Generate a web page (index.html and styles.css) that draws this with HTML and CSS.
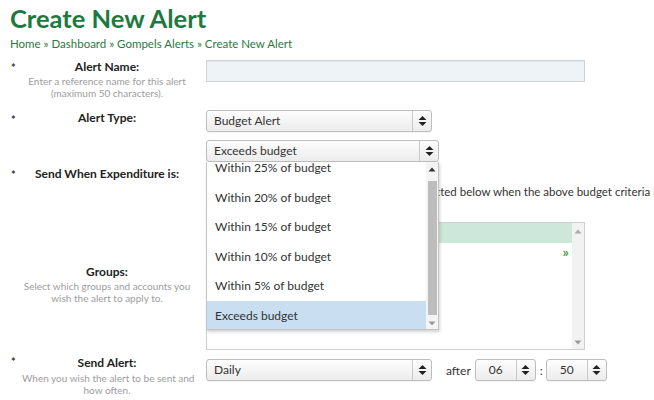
FILE: index.html
```html
<!DOCTYPE html>
<html>
<head>
<meta charset="utf-8">
<link rel="stylesheet" href="styles.css">
</head>
<body>
<div class="page">
  <h1 class="title">Create New Alert</h1>
  <div class="crumbs">Home » Dashboard » Gompels Alerts » Create New Alert</div>

  <div class="row row-name">
    <div class="star">*</div>
    <div class="label">
      <div class="label-title">Alert Name:</div>
      <div class="hint">Enter a reference name for this alert<br>(maximum 50 characters).</div>
    </div>
    <div class="field">
      <div class="text-input"></div>
    </div>
  </div>

  <div class="row row-type">
    <div class="star">*</div>
    <div class="label"><div class="label-title">Alert Type:</div></div>
    <div class="field">
      <div class="select w-wide">
        <span class="select-text">Budget Alert</span>
        <span class="select-arrow"><svg width="9" height="12" viewBox="0 0 9 12"><path d="M4.5 1 L8.5 5 H0.5 Z M0.5 7 H8.5 L4.5 11 Z" fill="#222"/></svg></span>
      </div>
    </div>
  </div>

  <div class="row row-exp">
    <div class="star">*</div>
    <div class="label"><div class="label-title">Send When Expenditure is:</div></div>
    <div class="field field-exp">
      <div class="select w-exp">
        <span class="select-text">Exceeds budget</span>
        <span class="select-arrow"><svg width="9" height="12" viewBox="0 0 9 12"><path d="M4.5 1 L8.5 5 H0.5 Z M0.5 7 H8.5 L4.5 11 Z" fill="#222"/></svg></span>
      </div>
      <p class="exp-note">Alerts will be sent to all of the users you selected below when the above budget criteria has been met.</p>
      <div class="dropdown">
        <div class="dropdown-list">
          <div class="opt">Within 25% of budget</div>
          <div class="opt">Within 20% of budget</div>
          <div class="opt">Within 15% of budget</div>
          <div class="opt">Within 10% of budget</div>
          <div class="opt">Within 5% of budget</div>
          <div class="opt opt-selected">Exceeds budget</div>
        </div>
        <div class="dd-scroll">
          <svg class="dd-up" width="8" height="5" viewBox="0 0 8 5"><path d="M4 0.5 L7.5 4.5 H0.5 Z" fill="#333"/></svg>
          <div class="dd-thumb"></div>
          <svg class="dd-down" width="8" height="5" viewBox="0 0 8 5"><path d="M0.5 0.5 H7.5 L4 4.5 Z" fill="#999"/></svg>
        </div>
      </div>
    </div>
  </div>

  <div class="row row-groups">
    <div class="star"></div>
    <div class="label">
      <div class="label-title">Groups:</div>
      <div class="hint">Select which groups and accounts you<br>wish the alert to apply to.</div>
    </div>
    <div class="field">
      <div class="groups-box">
        <div class="groups-content">
          <div class="groups-sel"></div>
          <div class="groups-more">»</div>
        </div>
        <div class="groups-scroll">
          <svg width="8" height="5" viewBox="0 0 8 5"><path d="M4 0.5 L7.5 4.5 H0.5 Z" fill="#aaa"/></svg>
          <svg width="8" height="5" viewBox="0 0 8 5"><path d="M0.5 0.5 H7.5 L4 4.5 Z" fill="#999"/></svg>
        </div>
      </div>
    </div>
  </div>

  <div class="row row-send">
    <div class="star">*</div>
    <div class="label">
      <div class="label-title">Send Alert:</div>
      <div class="hint">When you wish the alert to be sent and<br>how often.</div>
    </div>
    <div class="field field-send">
      <div class="select w-wide">
        <span class="select-text">Daily</span>
        <span class="select-arrow"><svg width="9" height="12" viewBox="0 0 9 12"><path d="M4.5 1 L8.5 5 H0.5 Z M0.5 7 H8.5 L4.5 11 Z" fill="#222"/></svg></span>
      </div>
      <span class="after">after</span>
      <div class="select w-time">
        <span class="select-text center">06</span>
        <span class="select-arrow"><svg width="9" height="12" viewBox="0 0 9 12"><path d="M4.5 1 L8.5 5 H0.5 Z M0.5 7 H8.5 L4.5 11 Z" fill="#222"/></svg></span>
      </div>
      <span class="colon">:</span>
      <div class="select w-time">
        <span class="select-text center">50</span>
        <span class="select-arrow"><svg width="9" height="12" viewBox="0 0 9 12"><path d="M4.5 1 L8.5 5 H0.5 Z M0.5 7 H8.5 L4.5 11 Z" fill="#222"/></svg></span>
      </div>
    </div>
  </div>
</div>
</body>
</html>
```

FILE: styles.css
```css
html, body {
  margin: 0;
  padding: 0;
  background: #fff;
  overflow: hidden;
  width: 654px;
  height: 400px;
}
body {
  font-family: Lato, "Open Sans", sans-serif;
  color: #333;
  font-size: 12px;
}
.page {
  padding: 2px 0 0 10px;
}
.title {
  margin: 0;
  font-size: 25.5px;
  line-height: 32px;
  font-weight: 700;
  color: #1c7a40;
}
.crumbs {
  margin-top: 3px;
  font-size: 11.5px;
  line-height: 14px;
  color: #2b7a3e;
}
.row {
  display: grid;
  grid-template-columns: 12px 170px 1fr;
  column-gap: 0;
}
.star {
  font-size: 11px;
  font-weight: 700;
  line-height: 12px;
  color: #333;
  padding-left: 1px;
}
.label {
  text-align: center;
  white-space: nowrap;
}
.label-title {
  font-weight: 700;
  font-size: 12px;
  line-height: 14px;
  color: #222;
}
.hint {
  font-size: 10px;
  line-height: 12px;
  color: #9d9d9d;
  margin-top: 1px;
}
.field {
  position: relative;
  margin-left: 14px;
}

/* row 1 */
.row-name {
  margin-top: 9px;
  height: 50px;
}
.row-name .star { padding-top: 2px; }
.text-input {
  width: 377px;
  height: 20px;
  border: 1px solid #d2d2d2;
  background: #eef3f7;
  box-shadow: inset 0 1px 1px rgba(0,0,0,0.05);
}

/* selects */
.select {
  box-sizing: border-box;
  height: 22px;
  border: 1px solid #bdbdbd;
  border-radius: 3px;
  background: linear-gradient(#fdfdfd, #ececec);
  display: flex;
  align-items: stretch;
  box-shadow: 0 1px 0 rgba(0,0,0,0.04);
}
.select-text {
  flex: 1;
  padding-left: 7px;
  line-height: 20px;
  font-size: 12px;
  color: #333;
}
.select-text.center {
  text-align: center;
  padding-left: 0;
}
.select-arrow {
  width: 18px;
  border-left: 1px solid #c8c8c8;
  display: flex;
  align-items: center;
  justify-content: center;
}
.w-wide { width: 226px; }
.w-exp { width: 233px; }
.w-time { width: 61px; }

/* row 2 */
.row-type {
  height: 22px;
  margin-bottom: 8px;
}
.row-type .label { padding-top: 1px; }
.row-type .star { padding-top: 4px; }

/* row 3 */
.row-exp {
  height: 82px;
}
.row-exp .label { padding-top: 27px; }
.row-exp .star { padding-top: 29px; }
.exp-note {
  margin: 23px 0 0 0;
  text-indent: 5px;
  font-size: 11.5px;
  line-height: 14px;
  color: #333;
  white-space: nowrap;
}
.dropdown {
  position: absolute;
  top: 22px;
  left: 0;
  width: 233px;
  height: 168px;
  box-sizing: border-box;
  background: #fff;
  border: 1px solid #c4c4c4;
  border-top: none;
  box-shadow: 1px 2px 3px rgba(0,0,0,0.18);
  display: flex;
  overflow: hidden;
  z-index: 5;
}
.dropdown-list {
  flex: 1;
  margin-top: -9px;
}
.opt {
  height: 29.6px;
  line-height: 29.6px;
  padding-left: 8px;
  font-size: 12px;
  color: #333;
}
.opt-selected {
  background: #c9dff1;
}
.dd-scroll {
  width: 12px;
  background: #f4f4f4;
  display: flex;
  flex-direction: column;
  align-items: center;
}
.dd-up { margin-top: 5px; }
.dd-thumb {
  width: 9px;
  flex: 1;
  margin: 9px 0 6px;
  background: #bdbdbd;
}
.dd-down { margin-bottom: 3px; }

/* row 4 */
.row-groups {
  height: 128px;
  margin-bottom: 9px;
}
.row-groups .label { padding-top: 43px; }
.groups-box {
  width: 379px;
  height: 128px;
  box-sizing: border-box;
  border: 1px solid #cfcfcf;
  display: flex;
  background: #fff;
}
.groups-content {
  flex: 1;
}
.groups-sel {
  height: 20px;
  background: #cde7da;
}
.groups-more {
  text-align: right;
  padding-right: 3px;
  color: #4b9a3c;
  font-size: 14px;
  line-height: 18px;
  font-weight: 700;
}
.groups-scroll {
  width: 12px;
  background: #f2f2f2;
  display: flex;
  flex-direction: column;
  justify-content: space-between;
  align-items: center;
  padding: 6px 0 4px;
}

/* row 5 */
.row-send {
  height: 40px;
}
.row-send .label { margin-top: -3px; }
.row-send .star { margin-top: -3px; }
.row-send .hint { margin-top: 2px; }
.field-send {
  display: flex;
  align-items: center;
  align-self: start;
}
.after {
  margin-left: 14px;
  margin-right: 4px;
  font-size: 12px;
  color: #333;
}
.colon {
  margin: 0 3px 0 4px;
  font-size: 12px;
  color: #333;
}
```
